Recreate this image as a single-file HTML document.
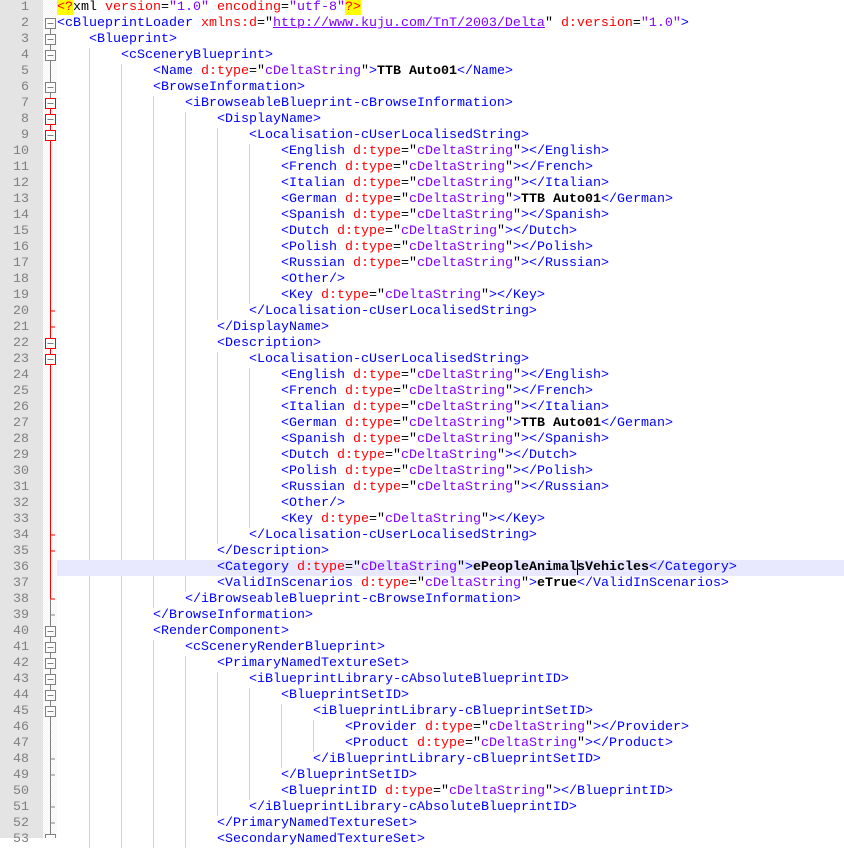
<!DOCTYPE html>
<html><head><meta charset="utf-8"><style>
body{margin:0;background:#fff;width:844px;height:838px;overflow:hidden;position:relative;font-family:"Liberation Mono",monospace;font-size:13.33px}
#num{position:absolute;left:0;top:0;width:43px;height:838px;background:#e4e4e4}
#num div{height:16px;line-height:16px;width:29px;text-align:right;color:#808080}
#fold{position:absolute;left:43px;top:0;width:14px;height:838px;background-color:#f4f4f4;background-image:linear-gradient(45deg,#fff 25%,transparent 25%,transparent 75%,#fff 75%),linear-gradient(45deg,#fff 25%,transparent 25%,transparent 75%,#fff 75%);background-size:2px 2px;background-position:0 0,1px 1px}
#fsvg{position:absolute;left:0;top:0}
#code{position:absolute;left:57px;top:0px;width:787px}
.l{height:16px;line-height:16px;white-space:pre;color:#000}
.hl{background:#e8e8ff}
.g{display:inline-block;margin-left:32px;height:16px;vertical-align:top;background:linear-gradient(to right,#d2d2d2 1px,transparent 1px) 0 0/32px 100%}
.i1{display:inline-block;width:32px}
.t{color:#0000ff}.a{color:#ff0000}.v{color:#8000ff}.b{font-weight:bold}
.y{background:#ffff00;color:#ff0000}
.u{color:#8000ff;text-decoration:underline}
.c{display:inline-block;width:1px;height:15px;background:#000;vertical-align:top;margin-right:-1px}
</style></head><body>
<div id="num">
<div>1</div><div>2</div><div>3</div><div>4</div><div>5</div><div>6</div><div>7</div><div>8</div><div>9</div><div>10</div><div>11</div><div>12</div><div>13</div><div>14</div><div>15</div><div>16</div><div>17</div><div>18</div><div>19</div><div>20</div><div>21</div><div>22</div><div>23</div><div>24</div><div>25</div><div>26</div><div>27</div><div>28</div><div>29</div><div>30</div><div>31</div><div>32</div><div>33</div><div>34</div><div>35</div><div>36</div><div>37</div><div>38</div><div>39</div><div>40</div><div>41</div><div>42</div><div>43</div><div>44</div><div>45</div><div>46</div><div>47</div><div>48</div><div>49</div><div>50</div><div>51</div><div>52</div><div>53</div>
</div>
<div id="fold"></div>
<svg id="fsvg" width="60" height="838" xmlns="http://www.w3.org/2000/svg">
<g stroke="#808080" stroke-width="1" fill="#fff">
<line x1="50.5" y1="24" x2="50.5" y2="838"/>
<g stroke="#808080"><line x1="50.5" y1="615" x2="55" y2="615"/><line x1="50.5" y1="759" x2="55" y2="759"/><line x1="50.5" y1="775" x2="55" y2="775"/><line x1="50.5" y1="807" x2="55" y2="807"/><line x1="50.5" y1="823" x2="55" y2="823"/></g>
<rect x="45.5" y="18.5" width="10" height="10"/><rect x="45.5" y="34.5" width="10" height="10"/><rect x="45.5" y="50.5" width="10" height="10"/><rect x="45.5" y="82.5" width="10" height="10"/>
<rect x="45.5" y="626.5" width="10" height="10"/><rect x="45.5" y="642.5" width="10" height="10"/><rect x="45.5" y="658.5" width="10" height="10"/><rect x="45.5" y="674.5" width="10" height="10"/><rect x="45.5" y="690.5" width="10" height="10"/><rect x="45.5" y="706.5" width="10" height="10"/><rect x="45.5" y="834.5" width="10" height="10"/>
<g stroke="#808080"><line x1="47.5" y1="23.5" x2="53.5" y2="23.5"/><line x1="47.5" y1="39.5" x2="53.5" y2="39.5"/><line x1="47.5" y1="55.5" x2="53.5" y2="55.5"/><line x1="47.5" y1="87.5" x2="53.5" y2="87.5"/><line x1="47.5" y1="631.5" x2="53.5" y2="631.5"/><line x1="47.5" y1="647.5" x2="53.5" y2="647.5"/><line x1="47.5" y1="663.5" x2="53.5" y2="663.5"/><line x1="47.5" y1="679.5" x2="53.5" y2="679.5"/><line x1="47.5" y1="695.5" x2="53.5" y2="695.5"/><line x1="47.5" y1="711.5" x2="53.5" y2="711.5"/></g>
</g>
<g stroke="#ff0000" stroke-width="1" fill="#fff">
<line x1="50.5" y1="104" x2="50.5" y2="599"/>
<line x1="50.5" y1="311" x2="55" y2="311"/><line x1="50.5" y1="327" x2="55" y2="327"/><line x1="50.5" y1="535" x2="55" y2="535"/><line x1="50.5" y1="551" x2="55" y2="551"/><line x1="50.5" y1="599" x2="55" y2="599"/>
<rect x="45.5" y="98.5" width="10" height="10"/><rect x="45.5" y="114.5" width="10" height="10"/><rect x="45.5" y="130.5" width="10" height="10"/><rect x="45.5" y="338.5" width="10" height="10"/><rect x="45.5" y="354.5" width="10" height="10"/>
<g stroke="#808080"><line x1="47.5" y1="103.5" x2="53.5" y2="103.5"/><line x1="47.5" y1="119.5" x2="53.5" y2="119.5"/><line x1="47.5" y1="135.5" x2="53.5" y2="135.5"/><line x1="47.5" y1="343.5" x2="53.5" y2="343.5"/><line x1="47.5" y1="359.5" x2="53.5" y2="359.5"/></g>
</g>
</svg>
<div id="code">
<div class="l"><span class="y">&lt;?</span>xml <span class="a">version</span>=<span class="v">"1.0"</span> <span class="a">encoding</span>=<span class="v">"utf-8"</span><span class="y">?&gt;</span></div>
<div class="l"><span class="t">&lt;cBlueprintLoader</span> <span class="a">xmlns:d</span>="<span class="u">http://www.kuju.com/TnT/2003/Delta</span>" <span class="a">d:version</span>=<span class="v">"1.0"</span><span class="t">&gt;</span></div>
<div class="l"><span class="i1"></span><span class="t">&lt;Blueprint&gt;</span></div>
<div class="l"><span class="g" style="width:32px"></span><span class="t">&lt;cSceneryBlueprint&gt;</span></div>
<div class="l"><span class="g" style="width:64px"></span><span class="t">&lt;Name</span> <span class="a">d:type</span>="<span class="v">cDeltaString</span>"<span class="t">&gt;</span><span class="b">TTB Auto01</span><span class="t">&lt;/Name&gt;</span></div>
<div class="l"><span class="g" style="width:64px"></span><span class="t">&lt;BrowseInformation&gt;</span></div>
<div class="l"><span class="g" style="width:96px"></span><span class="t">&lt;iBrowseableBlueprint-cBrowseInformation&gt;</span></div>
<div class="l"><span class="g" style="width:128px"></span><span class="t">&lt;DisplayName&gt;</span></div>
<div class="l"><span class="g" style="width:160px"></span><span class="t">&lt;Localisation-cUserLocalisedString&gt;</span></div>
<div class="l"><span class="g" style="width:192px"></span><span class="t">&lt;English</span> <span class="a">d:type</span>="<span class="v">cDeltaString</span>"<span class="t">&gt;&lt;/English&gt;</span></div>
<div class="l"><span class="g" style="width:192px"></span><span class="t">&lt;French</span> <span class="a">d:type</span>="<span class="v">cDeltaString</span>"<span class="t">&gt;&lt;/French&gt;</span></div>
<div class="l"><span class="g" style="width:192px"></span><span class="t">&lt;Italian</span> <span class="a">d:type</span>="<span class="v">cDeltaString</span>"<span class="t">&gt;&lt;/Italian&gt;</span></div>
<div class="l"><span class="g" style="width:192px"></span><span class="t">&lt;German</span> <span class="a">d:type</span>="<span class="v">cDeltaString</span>"<span class="t">&gt;</span><span class="b">TTB Auto01</span><span class="t">&lt;/German&gt;</span></div>
<div class="l"><span class="g" style="width:192px"></span><span class="t">&lt;Spanish</span> <span class="a">d:type</span>="<span class="v">cDeltaString</span>"<span class="t">&gt;&lt;/Spanish&gt;</span></div>
<div class="l"><span class="g" style="width:192px"></span><span class="t">&lt;Dutch</span> <span class="a">d:type</span>="<span class="v">cDeltaString</span>"<span class="t">&gt;&lt;/Dutch&gt;</span></div>
<div class="l"><span class="g" style="width:192px"></span><span class="t">&lt;Polish</span> <span class="a">d:type</span>="<span class="v">cDeltaString</span>"<span class="t">&gt;&lt;/Polish&gt;</span></div>
<div class="l"><span class="g" style="width:192px"></span><span class="t">&lt;Russian</span> <span class="a">d:type</span>="<span class="v">cDeltaString</span>"<span class="t">&gt;&lt;/Russian&gt;</span></div>
<div class="l"><span class="g" style="width:192px"></span><span class="t">&lt;Other/&gt;</span></div>
<div class="l"><span class="g" style="width:192px"></span><span class="t">&lt;Key</span> <span class="a">d:type</span>="<span class="v">cDeltaString</span>"<span class="t">&gt;&lt;/Key&gt;</span></div>
<div class="l"><span class="g" style="width:160px"></span><span class="t">&lt;/Localisation-cUserLocalisedString&gt;</span></div>
<div class="l"><span class="g" style="width:128px"></span><span class="t">&lt;/DisplayName&gt;</span></div>
<div class="l"><span class="g" style="width:128px"></span><span class="t">&lt;Description&gt;</span></div>
<div class="l"><span class="g" style="width:160px"></span><span class="t">&lt;Localisation-cUserLocalisedString&gt;</span></div>
<div class="l"><span class="g" style="width:192px"></span><span class="t">&lt;English</span> <span class="a">d:type</span>="<span class="v">cDeltaString</span>"<span class="t">&gt;&lt;/English&gt;</span></div>
<div class="l"><span class="g" style="width:192px"></span><span class="t">&lt;French</span> <span class="a">d:type</span>="<span class="v">cDeltaString</span>"<span class="t">&gt;&lt;/French&gt;</span></div>
<div class="l"><span class="g" style="width:192px"></span><span class="t">&lt;Italian</span> <span class="a">d:type</span>="<span class="v">cDeltaString</span>"<span class="t">&gt;&lt;/Italian&gt;</span></div>
<div class="l"><span class="g" style="width:192px"></span><span class="t">&lt;German</span> <span class="a">d:type</span>="<span class="v">cDeltaString</span>"<span class="t">&gt;</span><span class="b">TTB Auto01</span><span class="t">&lt;/German&gt;</span></div>
<div class="l"><span class="g" style="width:192px"></span><span class="t">&lt;Spanish</span> <span class="a">d:type</span>="<span class="v">cDeltaString</span>"<span class="t">&gt;&lt;/Spanish&gt;</span></div>
<div class="l"><span class="g" style="width:192px"></span><span class="t">&lt;Dutch</span> <span class="a">d:type</span>="<span class="v">cDeltaString</span>"<span class="t">&gt;&lt;/Dutch&gt;</span></div>
<div class="l"><span class="g" style="width:192px"></span><span class="t">&lt;Polish</span> <span class="a">d:type</span>="<span class="v">cDeltaString</span>"<span class="t">&gt;&lt;/Polish&gt;</span></div>
<div class="l"><span class="g" style="width:192px"></span><span class="t">&lt;Russian</span> <span class="a">d:type</span>="<span class="v">cDeltaString</span>"<span class="t">&gt;&lt;/Russian&gt;</span></div>
<div class="l"><span class="g" style="width:192px"></span><span class="t">&lt;Other/&gt;</span></div>
<div class="l"><span class="g" style="width:192px"></span><span class="t">&lt;Key</span> <span class="a">d:type</span>="<span class="v">cDeltaString</span>"<span class="t">&gt;&lt;/Key&gt;</span></div>
<div class="l"><span class="g" style="width:160px"></span><span class="t">&lt;/Localisation-cUserLocalisedString&gt;</span></div>
<div class="l"><span class="g" style="width:128px"></span><span class="t">&lt;/Description&gt;</span></div>
<div class="l hl"><span class="i1" style="width:160px"></span><span class="t">&lt;Category</span> <span class="a">d:type</span>="<span class="v">cDeltaString</span>"<span class="t">&gt;</span><span class="b">ePeopleAnimal<span class="c"></span>sVehicles</span><span class="t">&lt;/Category&gt;</span></div>
<div class="l"><span class="g" style="width:128px"></span><span class="t">&lt;ValidInScenarios</span> <span class="a">d:type</span>="<span class="v">cDeltaString</span>"<span class="t">&gt;</span><span class="b">eTrue</span><span class="t">&lt;/ValidInScenarios&gt;</span></div>
<div class="l"><span class="g" style="width:96px"></span><span class="t">&lt;/iBrowseableBlueprint-cBrowseInformation&gt;</span></div>
<div class="l"><span class="g" style="width:64px"></span><span class="t">&lt;/BrowseInformation&gt;</span></div>
<div class="l"><span class="g" style="width:64px"></span><span class="t">&lt;RenderComponent&gt;</span></div>
<div class="l"><span class="g" style="width:96px"></span><span class="t">&lt;cSceneryRenderBlueprint&gt;</span></div>
<div class="l"><span class="g" style="width:128px"></span><span class="t">&lt;PrimaryNamedTextureSet&gt;</span></div>
<div class="l"><span class="g" style="width:160px"></span><span class="t">&lt;iBlueprintLibrary-cAbsoluteBlueprintID&gt;</span></div>
<div class="l"><span class="g" style="width:192px"></span><span class="t">&lt;BlueprintSetID&gt;</span></div>
<div class="l"><span class="g" style="width:224px"></span><span class="t">&lt;iBlueprintLibrary-cBlueprintSetID&gt;</span></div>
<div class="l"><span class="g" style="width:256px"></span><span class="t">&lt;Provider</span> <span class="a">d:type</span>="<span class="v">cDeltaString</span>"<span class="t">&gt;&lt;/Provider&gt;</span></div>
<div class="l"><span class="g" style="width:256px"></span><span class="t">&lt;Product</span> <span class="a">d:type</span>="<span class="v">cDeltaString</span>"<span class="t">&gt;&lt;/Product&gt;</span></div>
<div class="l"><span class="g" style="width:224px"></span><span class="t">&lt;/iBlueprintLibrary-cBlueprintSetID&gt;</span></div>
<div class="l"><span class="g" style="width:192px"></span><span class="t">&lt;/BlueprintSetID&gt;</span></div>
<div class="l"><span class="g" style="width:192px"></span><span class="t">&lt;BlueprintID</span> <span class="a">d:type</span>="<span class="v">cDeltaString</span>"<span class="t">&gt;&lt;/BlueprintID&gt;</span></div>
<div class="l"><span class="g" style="width:160px"></span><span class="t">&lt;/iBlueprintLibrary-cAbsoluteBlueprintID&gt;</span></div>
<div class="l"><span class="g" style="width:128px"></span><span class="t">&lt;/PrimaryNamedTextureSet&gt;</span></div>
<div class="l"><span class="g" style="width:128px"></span><span class="t">&lt;SecondaryNamedTextureSet&gt;</span></div>
</div>
</body></html>
